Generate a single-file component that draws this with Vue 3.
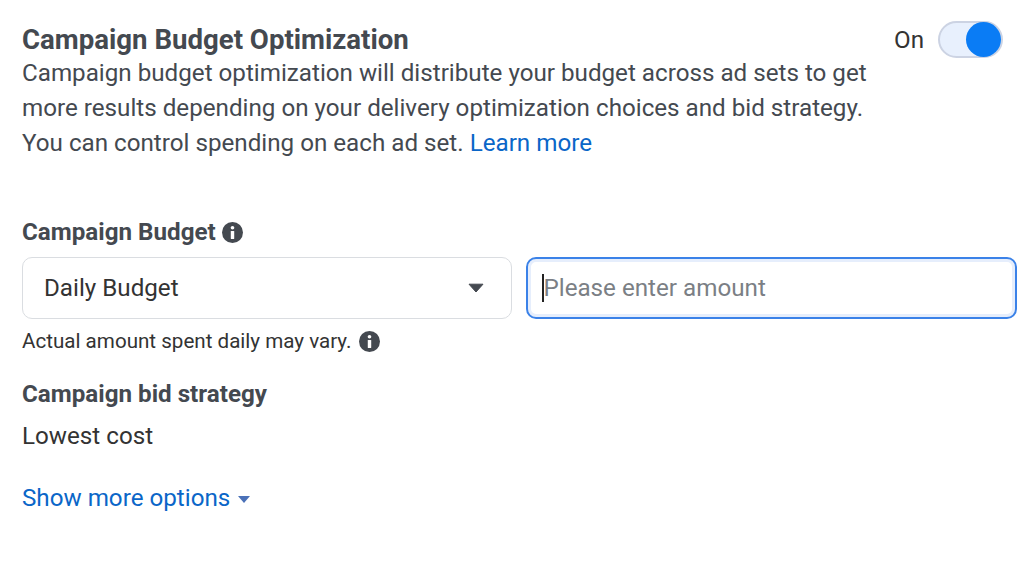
<template>
  <section class="budget-panel">
    <div class="cbo-header">
      <div class="cbo-text">
        <h2 class="cbo-title">Campaign Budget Optimization</h2>
        <p class="cbo-desc">
          Campaign budget optimization will distribute your budget across ad sets to get<br />
          more results depending on your delivery optimization choices and bid strategy.<br />
          You can control spending on each ad set. <a class="link">Learn more</a>
        </p>
      </div>
      <div class="toggle-group">
        <span class="toggle-label">On</span>
        <div class="toggle"><span class="toggle-knob"></span></div>
      </div>
    </div>

    <div class="label-row budget-label">
      <span class="field-label">Campaign Budget</span>
      <svg class="info" viewBox="0 0 22 22">
        <circle cx="11" cy="11" r="11" fill="#444950" />
        <circle cx="11" cy="6" r="1.9" fill="#fff" />
        <rect x="9.2" y="9.4" width="3.6" height="8.4" rx="0.6" fill="#fff" />
      </svg>
    </div>

    <div class="budget-row">
      <div class="select-box">
        <span>Daily Budget</span>
        <svg class="caret" viewBox="0 0 16 10"><path d="M1 1.2h14L8 9z" fill="#444950" stroke="#444950" stroke-linejoin="round" /></svg>
      </div>
      <div class="amount-box">
        <span class="cursor"></span>
        <span class="placeholder">Please enter amount</span>
      </div>
    </div>

    <div class="label-row hint-row">
      <span class="hint">Actual amount spent daily may vary.</span>
      <svg class="info" viewBox="0 0 22 22">
        <circle cx="11" cy="11" r="11" fill="#444950" />
        <circle cx="11" cy="6" r="1.9" fill="#fff" />
        <rect x="9.2" y="9.4" width="3.6" height="8.4" rx="0.6" fill="#fff" />
      </svg>
    </div>

    <div class="field-label bid-label">Campaign bid strategy</div>
    <div class="bid-value">Lowest cost</div>

    <div class="more-row">
      <a class="link">Show more options</a>
      <svg class="more-caret" viewBox="0 0 12 7"><path d="M0 0h12L6 7z" fill="#4b71b8" /></svg>
    </div>
  </section>
</template>

<script setup>
</script>

<style>
html, body { background: #fff; }
</style>

<style scoped>
.budget-panel {
  width: 1024px;
  height: 565px;
  box-sizing: border-box;
  padding: 22px 7px 0 22px;
  background: #fff;
  color: #1c1e21;
  font-family: Roboto, "Liberation Sans", sans-serif;
  overflow: hidden;
}

.cbo-header { display: flex; justify-content: space-between; align-items: flex-start; }
.cbo-text { width: 860px; white-space: nowrap; }
.cbo-title { margin: 0; padding-top: 1px; font-size: 27.6px; line-height: 33px; font-weight: 700; color: #444950; }
.cbo-desc { margin: 0; font-size: 24.2px; line-height: 35px; color: #444950; }
.link { color: #0a66c8; }

.toggle-group { display: flex; align-items: center; gap: 14px; margin: -1px 14px 0 0; }
.toggle-label { font-size: 24.2px; color: #333; }
.toggle {
  width: 65px;
  height: 37px;
  box-sizing: border-box;
  border: 2px solid #ccd3e3;
  border-radius: 19px;
  background: #e8f0fd;
  display: flex;
  justify-content: flex-end;
  align-items: center;
}
.toggle-knob { width: 35px; height: 35px; border-radius: 50%; background: #0a7cf5; }

.label-row { display: flex; align-items: center; }
.budget-label { margin-top: 56px; gap: 6px; height: 30px; }
.field-label { font-size: 24.2px; font-weight: 700; color: #444950; }
.info { width: 21px; height: 21px; }

.budget-row { display: flex; gap: 14px; margin-top: 10px; }
.select-box {
  width: 490px;
  height: 62px;
  box-sizing: border-box;
  padding: 0 27px 0 21px;
  border: 1.5px solid #dadde1;
  border-radius: 10px;
  display: flex;
  justify-content: space-between;
  align-items: center;
  font-size: 24.2px;
  color: #333;
}
.caret { width: 16px; height: 10px; }
.amount-box {
  flex: 1;
  height: 62px;
  box-sizing: border-box;
  padding-left: 14px;
  border: 2px solid #3b82e8;
  border-radius: 10px;
  box-shadow: inset 0 0 0 3px #e6eefc;
  display: flex;
  align-items: center;
  font-size: 24.2px;
}
.cursor { width: 1.5px; height: 28px; background: #222; }
.placeholder { color: #7b7f85; }

.hint-row { margin-top: 9px; gap: 8px; height: 26px; }
.hint { font-size: 20.6px; color: #333; }

.bid-label { margin-top: 25px; line-height: 30px; }
.bid-value { margin-top: 11px; font-size: 24.2px; line-height: 32px; color: #333; }

.more-row { display: flex; align-items: center; gap: 8px; margin-top: 30px; font-size: 24.2px; line-height: 32px; }
.more-caret { width: 12px; height: 7px; margin-top: 3px; }
</style>
